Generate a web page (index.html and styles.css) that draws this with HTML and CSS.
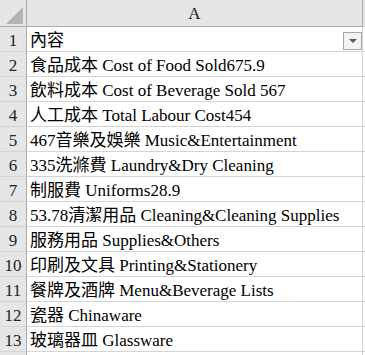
FILE: index.html
```html
<!DOCTYPE html>
<html>
<head>
<meta charset="utf-8">
<title>Sheet</title>
<link rel="stylesheet" href="styles.css">
</head>
<body>
<div class="sheet">
  <div class="corner"><span class="tri"></span></div>
  <div class="colhead">A</div>
  <div class="pad head-pad"></div>

  <div class="rowhead">1</div>
  <div class="cell filter-cell"><span>內容</span><span class="dd"><span class="dd-tri"></span></span></div>
  <div class="pad"></div>

  <div class="rowhead">2</div>
  <div class="cell">食品成本 Cost of Food Sold675.9</div>
  <div class="pad"></div>

  <div class="rowhead">3</div>
  <div class="cell">飲料成本 Cost of Beverage Sold 567</div>
  <div class="pad"></div>

  <div class="rowhead">4</div>
  <div class="cell">人工成本 Total Labour Cost454</div>
  <div class="pad"></div>

  <div class="rowhead">5</div>
  <div class="cell">467音樂及娛樂 Music&amp;Entertainment</div>
  <div class="pad"></div>

  <div class="rowhead">6</div>
  <div class="cell">335洗滌費 Laundry&amp;Dry Cleaning</div>
  <div class="pad"></div>

  <div class="rowhead">7</div>
  <div class="cell">制服費 Uniforms28.9</div>
  <div class="pad"></div>

  <div class="rowhead">8</div>
  <div class="cell">53.78清潔用品 Cleaning&amp;Cleaning Supplies</div>
  <div class="pad"></div>

  <div class="rowhead">9</div>
  <div class="cell">服務用品 Supplies&amp;Others</div>
  <div class="pad"></div>

  <div class="rowhead">10</div>
  <div class="cell">印刷及文具 Printing&amp;Stationery</div>
  <div class="pad"></div>

  <div class="rowhead">11</div>
  <div class="cell">餐牌及酒牌 Menu&amp;Beverage Lists</div>
  <div class="pad"></div>

  <div class="rowhead">12</div>
  <div class="cell">瓷器 Chinaware</div>
  <div class="pad"></div>

  <div class="rowhead">13</div>
  <div class="cell">玻璃器皿 Glassware</div>
  <div class="pad"></div>

  <div class="rowhead last"></div>
  <div class="cell last"></div>
  <div class="pad last"></div>
</div>
</body>
</html>
```
FILE: styles.css
```css
html, body {
  margin: 0;
  padding: 0;
  background: #ffffff;
}

body {
  width: 365px;
  height: 355px;
  overflow: hidden;
  font-family: "Liberation Serif", "Noto Sans CJK TC", serif;
  font-size: 17px;
  color: #000000;
}

.sheet {
  display: grid;
  grid-template-columns: 27px 336px 2px;
  grid-template-rows: 27px repeat(13, 25px) 3px;
}

.corner {
  background: #e6e6e6;
  border-right: 1px solid #ababab;
  border-bottom: 1px solid #ababab;
  box-sizing: border-box;
  display: flex;
  align-items: flex-end;
  justify-content: flex-end;
  padding: 0 3px 2px 0;
}

.tri {
  width: 0;
  height: 0;
  border-left: 17px solid transparent;
  border-bottom: 17px solid #b4b4b4;
}

.colhead {
  background: #e6e6e6;
  border-right: 1px solid #ababab;
  border-bottom: 1px solid #ababab;
  box-sizing: border-box;
  text-align: center;
  line-height: 28px;
  color: #222222;
}

.head-pad {
  background: #e6e6e6;
  border-bottom: 1px solid #ababab;
  box-sizing: border-box;
}

.rowhead {
  background: #e6e6e6;
  border-right: 1px solid #ababab;
  border-bottom: 1px solid #d4d4d4;
  box-sizing: border-box;
  text-align: center;
  line-height: 27px;
  color: #222222;
}

.cell {
  border-right: 1px solid #d4d4d4;
  border-bottom: 1px solid #d4d4d4;
  box-sizing: border-box;
  padding-left: 3px;
  line-height: 27px;
  white-space: nowrap;
  overflow: hidden;
}

.pad {
  border-bottom: 1px solid #d4d4d4;
  box-sizing: border-box;
}

.last {
  border-bottom: none;
}

.filter-cell {
  display: flex;
  justify-content: space-between;
}

.dd {
  align-self: flex-end;
  width: 19px;
  height: 18px;
  margin: 0 0 1px 0;
  box-sizing: border-box;
  border: 1px solid #a6a6a6;
  background: #f3f3f3;
  display: flex;
  align-items: center;
  justify-content: center;
}

.dd-tri {
  width: 0;
  height: 0;
  border-left: 4px solid transparent;
  border-right: 4px solid transparent;
  border-top: 4px solid #595959;
}
```
